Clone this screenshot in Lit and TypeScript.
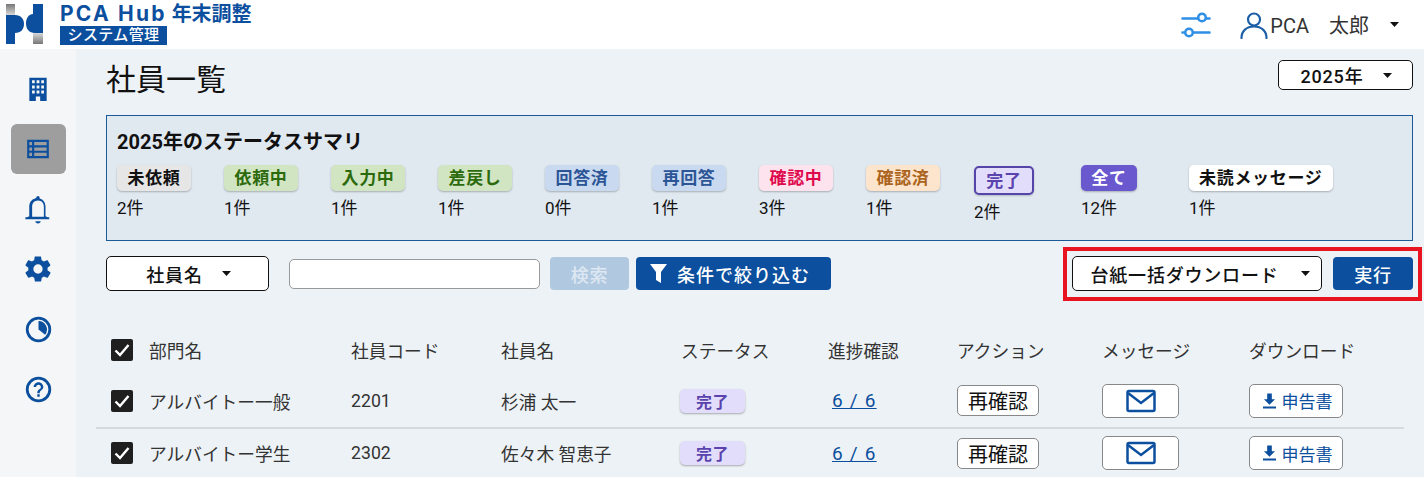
import { LitElement, html, css, svg } from 'lit';
import { customElement } from 'lit/decorators.js';

const caret = html`<svg class="caret" width="9" height="5" viewBox="0 0 10 5.5"><path d="M0 0h10L5 5.500z" fill="#111" /></svg>`;

const summary = [
  { label: '未依頼', cls: 'gray', count: '2件' },
  { label: '依頼中', cls: 'green', count: '1件' },
  { label: '入力中', cls: 'green', count: '1件' },
  { label: '差戻し', cls: 'green', count: '1件' },
  { label: '回答済', cls: 'blue', count: '0件' },
  { label: '再回答', cls: 'blue', count: '1件' },
  { label: '確認中', cls: 'pink', count: '3件' },
  { label: '確認済', cls: 'orange', count: '1件' },
  { label: '完了', cls: 'done selected', count: '2件' },
  { label: '全て', cls: 'all', count: '12件' },
  { label: '未読メッセージ', cls: 'white', count: '1件' },
];

const rows = [
  { dept: 'アルバイトー一般', code: '2201', name: '杉浦 太一' },
  { dept: 'アルバイトー学生', code: '2302', name: '佐々木 智恵子' },
];

const ring = 'M12 1.500a10.500 10.500 0 1 1 0 21 10.500 10.500 0 0 1 0-21zm0 2.300a8.200 8.200 0 1 0 0 16.400 8.200 8.200 0 0 0 0-16.400z';

const navIcons = [
  { size: 26, body: svg`<path fill-rule="evenodd" d="M4 1.500h16v21.500h-6v-4h-4v4H4zM6.500 4v2.800h2.500V4zm4.200 0v2.800h2.600V4zM15 4v2.800h2.500V4zM6.500 8.700v2.800h2.500V8.700zm4.200 0v2.800h2.600V8.700zm4.300 0v2.800h2.500V8.700zM6.500 13.400v2.800h2.500v-2.800zm4.200 0v2.800h2.600v-2.800zm4.300 0v2.800h2.500v-2.800z" />` },
  { size: 26, body: svg`<path fill-rule="evenodd" d="M2 3.500h20v17H2zM4 5.500v3h2.500v-3zm4.500 0v3H20v-3zM4 10.500v3h2.500v-3zm4.500 0v3H20v-3zM4 15.500v3h2.500v-3zm4.500 0v3H20v-3z" />` },
  { size: 30, body: svg`<path d="M12 23.500c1.200 0 2.100-.800 2.100-1.800H9.900c0 1 .900 1.800 2.100 1.800z" /><path fill-rule="evenodd" d="M10.700 2.800c0-.700.600-1.300 1.300-1.300s1.300.600 1.300 1.300v.700c3 .700 4.700 3.400 4.700 6.600v7.600l1.800 .800h1.200v1.600H1.900V18.500h1.300l1.800-.800V10.100c0-3.200 1.700-5.900 4.700-6.600zM12 5.200c-3 0-4.700 2.200-4.700 5v8h9.400v-8c0-2.800-1.700-5-4.700-5z" />` },
  { size: 32, body: svg`<path d="M19.100 12.900c0-.300.100-.600.100-.900s0-.600-.100-.900l2-1.600c.200-.100.200-.400.100-.600l-1.900-3.300c-.100-.200-.400-.300-.600-.200l-2.400 1c-.500-.400-1-.700-1.600-.900l-.400-2.500c0-.300-.200-.400-.500-.400h-3.800c-.200 0-.400.100-.500.400l-.400 2.500c-.600.200-1.100.500-1.600.900l-2.400-1c-.200-.100-.500 0-.600.200L2.700 8.900c-.100.200-.100.500.100.600l2 1.600c0 .300-.100.600-.100.900s0 .600.100.900l-2 1.600c-.200.100-.200.400-.100.600l1.900 3.300c.100.200.400.300.600.200l2.400-1c.500.400 1 .700 1.600.900l.400 2.500c0 .300.200.400.500.400h3.800c.200 0 .400-.100.500-.400l.400-2.500c.600-.200 1.100-.500 1.600-.900l2.400 1c.200.100.500 0 .600-.200l1.900-3.300c.100-.200.100-.500-.100-.600zM12 15.500a3.500 3.500 0 1 1 0-7 3.500 3.500 0 0 1 0 7z" />` },
  { size: 29, body: svg`<path fill-rule="evenodd" d="${ring}" /><path d="M12 5a7 7 0 0 1 5.500 11.300L12 12z" />` },
  { size: 29, body: svg`<path fill-rule="evenodd" d="${ring}" /><path d="M11 16h2v2h-2zm1-10c-2.200 0-4 1.800-4 4h2c0-1.100.900-2 2-2s2 .900 2 2c0 2-3 1.800-3 5h2c0-2.300 3-2.500 3-5 0-2.200-1.800-4-4-4z" />` },
];

@customElement('app-root')
export class AppRoot extends LitElement {
  static styles = css`
    :host {
      display: block;
      height: 477px;
      overflow: hidden;
      background: #edf2f6;
      color: #111;
      font-family: Roboto, 'Noto Sans CJK JP', sans-serif;
    }

    .header {
      height: 49px;
      background: #fff;
      display: flex;
      align-items: center;
      padding: 0 25px 0 6px;
      box-sizing: border-box;
    }

    .logo {
      display: block;
      margin-right: 17px;
    }

    .brand {
      display: flex;
      flex-direction: column;
      align-self: flex-start;
      padding-top: 1px;
    }

    .brand-top {
      display: flex;
      align-items: baseline;
      gap: 5px;
      height: 25px;
      color: #0b4f9e;
      font-weight: 700;
      line-height: 25px;
    }

    .brand-name {
      font-family: Inter, 'Noto Sans', sans-serif;
      font-size: 21px;
      letter-spacing: 2.200px;
    }

    .brand-sub {
      font-size: 20px;
    }

    .brand-tag {
      width: 107px;
      height: 19px;
      background: #0b4f9e;
      color: #fff;
      font-size: 15px;
      font-weight: 500;
      line-height: 19px;
      text-align: center;
      letter-spacing: 0.4px;
    }

    .spacer {
      flex: 1;
    }

    .tune {
      margin-right: 29px;
    }

    .user {
      display: flex;
      align-items: center;
      font-size: 20px;
      color: #333;
    }

    .user-name {
      margin-left: 2px;
      margin-right: 21px;
      white-space: pre;
    }

    .body {
      display: flex;
      height: 428px;
    }

    .nav {
      width: 76px;
      flex: none;
      background: #f5f6f7;
      display: flex;
      flex-direction: column;
      align-items: center;
      padding-top: 15px;
      box-sizing: border-box;
    }

    .nav-item {
      width: 55px;
      height: 50px;
      margin-bottom: 10px;
      border-radius: 6px;
      display: flex;
      align-items: center;
      justify-content: center;
      fill: #0b4f9e;
    }

    .nav-item.active {
      background: #9e9e9e;
    }

    .main {
      flex: 1;
      padding: 0 11px 0 30px;
      min-width: 0;
    }

    .title-row {
      height: 66px;
      display: flex;
      justify-content: space-between;
      align-items: flex-start;
    }

    h1 {
      margin: 10px 0 0;
      font-size: 30px;
      font-weight: 400;
      line-height: 42px;
    }

    .select {
      display: flex;
      align-items: center;
      justify-content: center;
      box-sizing: border-box;
      background: #fff;
      border: 1px solid #111;
      border-radius: 5px;
      font-weight: 500;
      letter-spacing: 0.8px;
      font-size: 18px;
    }

    .year {
      width: 135px;
      height: 30px;
      margin-top: 11px;
      padding-left: 2px;
      gap: 20px;
    }

    .summary {
      height: 126px;
      box-sizing: border-box;
      background: #e0e8f0;
      border: 1px solid #1c5a96;
      padding: 10px 10px 0;
    }

    h2 {
      margin: 2px 0 8px;
      font-size: 20px;
      font-weight: 700;
      line-height: 29px;
    }

    .cards {
      display: grid;
      grid-template-columns: repeat(7, 107px) 108px 107px 108px auto;
    }

    .card {
      font-size: 17px;
      line-height: 20px;
    }

    .pill {
      display: inline-flex;
      align-items: center;
      justify-content: center;
      height: 26px;
      min-width: 74px;
      padding: 0 10px;
      box-sizing: border-box;
      border-radius: 5px;
      font-size: 17px;
      font-weight: 700;
      letter-spacing: 0.700px;
      box-shadow: 0 1px 2px rgba(0, 0, 0, 0.25);
      vertical-align: top;
    }

    .count {
      margin-top: 7px;
    }

    .gray { background: #e6e6e6; color: #111; }
    .green { background: #d2e5c3; color: #2c6a0c; }
    .blue { background: #c9daf0; color: #2c5596; }
    .pink { background: #fde3ee; color: #df0a4d; }
    .orange { background: #fde4cc; color: #ab6420; }
    .done { background: #e2ddfb; color: #5b43ae; }
    .all { background: #6a58cf; color: #fff; min-width: 56px; }
    .white { background: #fff; color: #111; }

    .pill.selected {
      min-width: 60px;
      height: 29px;
      margin-top: 1px;
      border: 2px solid #5545a8;
      box-shadow: 0 1px 2px rgba(0, 0, 0, 0.2);
    }

    .toolbar {
      display: flex;
      align-items: center;
      height: 35px;
      margin-top: 15px;
    }

    .field-select {
      width: 163px;
      height: 35px;
      padding-left: 2px;
      gap: 19px;
    }

    .search-input {
      width: 251px;
      height: 30px;
      box-sizing: border-box;
      margin-left: 20px;
      background: #fff;
      border: 1px solid #999;
      border-radius: 5px;
    }

    .btn {
      display: flex;
      align-items: center;
      justify-content: center;
      height: 33px;
      box-sizing: border-box;
      background: #0b4f9e;
      color: #fff;
      border-radius: 4px;
      font-size: 18px;
      font-weight: 500;
      letter-spacing: 0.800px;
    }

    .btn.search {
      width: 79px;
      margin-left: 10px;
      background: #b1c8e1;
      color: #dfe8f2;
    }

    .btn.filter {
      width: 195px;
      margin-left: 7px;
      padding-right: 7px;
      gap: 10px;
      letter-spacing: 1px;
    }

    .bulk {
      display: flex;
      align-items: center;
      gap: 11px;
      margin: -9px -9px -10px auto;
      padding: 5px 5px 6px 5px;
      border: 4px solid #e8141f;
    }

    .bulk .select {
      width: 250px;
      height: 35px;
      padding-left: 6px;
      gap: 22px;
    }

    .btn.run {
      width: 80px;
    }

    .table {
      margin: 34px 9px 0 -10px;
    }

    .row {
      display: grid;
      grid-template-columns: 53px 202px 150px 180px 147px 129px 145px 147px 1fr;
      align-items: center;
      font-size: 17.700px;
      color: #333;
    }

    .row.head {
      height: 50px;
    }

    .row.item {
      height: 52px;
      padding-bottom: 1px;
      box-sizing: border-box;
    }

    .row.item + .row.item {
      padding-bottom: 2px;
      border-top: 2px solid #d4dadf;
    }

    .check {
      width: 22px;
      height: 22px;
      margin-left: 15px;
      background: #1f1f1f;
      border-radius: 2px;
      display: flex;
      align-items: center;
      justify-content: center;
    }

    .status {
      display: inline-flex;
      align-items: center;
      justify-content: center;
      width: 65px;
      height: 24px;
      margin-left: -1px;
      border-radius: 5px;
      background: #e2ddfb;
      color: #5b43ae;
      font-size: 16px;
      font-weight: 700;
      letter-spacing: 0.600px;
      box-shadow: 0 1px 2px rgba(0, 0, 0, 0.3);
    }

    .progress {
      margin-left: 4px;
      color: #0b4f9e;
      font-size: 19px;
      letter-spacing: 1.200px;
      text-decoration: underline;
    }

    .outline {
      display: inline-flex;
      align-items: center;
      justify-content: center;
      box-sizing: border-box;
      background: #fff;
      border: 1px solid #888;
      border-radius: 5px;
      vertical-align: middle;
    }

    .recheck {
      width: 82px;
      height: 31px;
      font-size: 20px;
      color: #111;
    }

    .mail {
      width: 77px;
      height: 34px;
    }

    .download {
      width: 94px;
      height: 34px;
      padding-left: 3px;
      gap: 6px;
      color: #0b4f9e;
      font-size: 17px;
    }
  `;

  private renderLogo() {
    return html`<svg class="logo" width="37" height="41" viewBox="0 0 37 41">
      <defs>
        <linearGradient id="gTop" x1="0" y1="0" x2="0" y2="1">
          <stop offset="0" stop-color="#777" />
          <stop offset="1" stop-color="#d8d8d8" />
        </linearGradient>
        <linearGradient id="gBottom" x1="0" y1="0" x2="0" y2="1">
          <stop offset="0" stop-color="#d8d8d8" />
          <stop offset="1" stop-color="#777" />
        </linearGradient>
      </defs>
      <rect x="0" y="0" width="9" height="11" fill="url(#gTop)" />
      <path d="M0 11h9c6 0 9 4 9 9s-3 9-9 9v11H0z" fill="#0b4f9e" />
      <path d="M37 0v29H29c-6 0-9-4-9-9.500S23 10 27 10V0z" fill="#0b4f9e" />
      <rect x="27" y="29" width="10" height="11" fill="url(#gBottom)" />
    </svg>`;
  }

  private renderCheck() {
    return html`<div class="check">
      <svg width="16" height="14" viewBox="0 0 16 14" fill="none" stroke="#fff" stroke-width="2.400"><path d="M1.500 7.500l4.500 4.500L14.500 2" /></svg>
    </div>`;
  }

  render() {
    return html`
      <div class="header">
        ${this.renderLogo()}
        <div class="brand">
          <div class="brand-top">
            <span class="brand-name">PCA Hub</span>
            <span class="brand-sub">年末調整</span>
          </div>
          <div class="brand-tag">システム管理</div>
        </div>
        <div class="spacer"></div>
        <svg class="tune" width="30" height="26" viewBox="0 0 30 26" fill="none" stroke="#2f8fe6" stroke-width="2.600" stroke-linecap="round">
          <path d="M1.500 6.500h15M25.500 6.500h3M12.500 20.500h16M1.500 20.500h1" />
          <circle cx="21" cy="5.500" r="3.800" />
          <circle cx="8" cy="20.500" r="3.800" />
        </svg>
        <div class="user">
          <svg width="28" height="28" viewBox="0 0 28 28" fill="none" stroke="#1c5fa8" stroke-width="2.200" stroke-linecap="round">
            <circle cx="14" cy="8.500" r="6" />
            <path d="M1.500 27c0-7 5-11.500 12.500-11.500S26.500 20 26.500 27" />
          </svg>
          <span class="user-name">PCA　太郎</span>
          ${caret}
        </div>
      </div>
      <div class="body">
        <nav class="nav">
          ${navIcons.map(
            (icon, i) => html`<div class="nav-item ${i === 1 ? 'active' : ''}">
              <svg width=${icon.size} height=${icon.size} viewBox="0 0 24 24">${icon.body}</svg>
            </div>`
          )}
        </nav>
        <main class="main">
          <div class="title-row">
            <h1>社員一覧</h1>
            <div class="select year">2025年 ${caret}</div>
          </div>
          <section class="summary">
            <h2>2025年のステータスサマリ</h2>
            <div class="cards">
              ${summary.map(
                (s) => html`<div class="card">
                  <span class="pill ${s.cls}">${s.label}</span>
                  <div class="count">${s.count}</div>
                </div>`
              )}
            </div>
          </section>
          <div class="toolbar">
            <div class="select field-select">社員名 ${caret}</div>
            <div class="search-input"></div>
            <div class="btn search">検索</div>
            <div class="btn filter">
              <svg width="17" height="19" viewBox="0 0 17 19"><path d="M0 0h17l-6 8v11l-5-3V8z" fill="#fff" /></svg>
              条件で絞り込む
            </div>
            <div class="bulk">
              <div class="select">台紙一括ダウンロード ${caret}</div>
              <div class="btn run">実行</div>
            </div>
          </div>
          <div class="table">
            <div class="row head">
              ${this.renderCheck()}
              <span>部門名</span>
              <span>社員コード</span>
              <span>社員名</span>
              <span>ステータス</span>
              <span>進捗確認</span>
              <span>アクション</span>
              <span>メッセージ</span>
              <span>ダウンロード</span>
            </div>
            ${rows.map(
              (r) => html`<div class="row item">
                ${this.renderCheck()}
                <span>${r.dept}</span>
                <span>${r.code}</span>
                <span>${r.name}</span>
                <span><span class="status">完了</span></span>
                <span><span class="progress">6 / 6</span></span>
                <span><span class="outline recheck">再確認</span></span>
                <span><span class="outline mail">
                  <svg width="30" height="24" viewBox="0 0 30 24" fill="none" stroke="#0b4f9e" stroke-width="2.500">
                    <rect x="1.500" y="2" width="27" height="20" rx="1.500" />
                    <path d="M2 4l13 10L28 4" />
                  </svg>
                </span></span>
                <span><span class="outline download">
                  <svg width="13" height="16" viewBox="0 0 14 16" fill="#0b4f9e"><path d="M4.500 0h5v6H13l-6 6-6-6h3.500zM0 14h14v2H0z" /></svg>
                  申告書
                </span></span>
              </div>`
            )}
          </div>
        </main>
      </div>
    `;
  }
}
